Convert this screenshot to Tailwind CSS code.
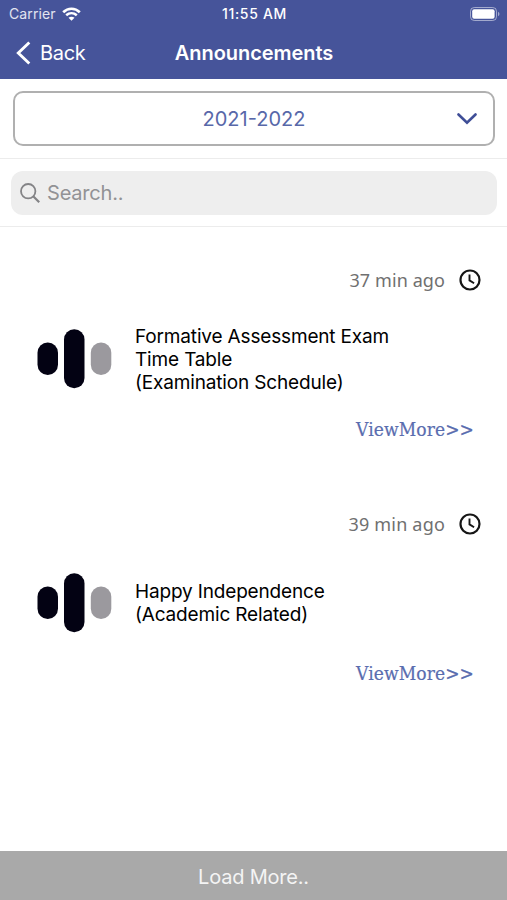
<!DOCTYPE html>
<html lang="en">
<head>
    <meta charset="UTF-8">
    <meta name="viewport" content="width=device-width, initial-scale=1.0">
    <title>Announcements</title>
    <script src="https://cdn.jsdelivr.net/npm/@tailwindcss/browser@4"></script>
</head>
<body class="bg-white font-['Inter',sans-serif]">
    <div class="flex h-[900px] w-[507px] flex-col overflow-hidden">
        <header class="h-[79px] bg-[#46549a] text-white">
            <div class="grid h-[27px] grid-cols-3 items-center pl-[9px] pr-[7px]">
                <div class="flex items-center gap-[6px]">
                    <span class="text-[14px] tracking-[0.1px] text-white/85">Carrier</span>
                    <svg class="h-[14px] w-[19px]" viewBox="0 0 19 14" fill="none" aria-hidden="true">
                        <path d="M1.2 5.2C6 .6 13 .6 17.8 5.2" stroke="currentColor" stroke-width="2.7"/>
                        <path d="M4.2 8.3C7.3 5.5 11.7 5.5 14.8 8.3" stroke="currentColor" stroke-width="2.5"/>
                        <path d="M9.5 13.8 6.5 10.7C8.2 9.3 10.8 9.3 12.5 10.7Z" fill="currentColor"/>
                    </svg>
                </div>
                <span class="text-center text-[14px] font-medium tracking-[0.7px] whitespace-nowrap">11:55 AM</span>
                <svg class="h-[14px] w-[30px] justify-self-end" viewBox="0 0 30 14" fill="none" aria-hidden="true">
                    <rect x=".5" y=".5" width="26" height="13" rx="3.8" stroke="#fff" stroke-opacity=".5"/>
                    <rect x="2.2" y="2.2" width="22.4" height="9.6" rx="2" fill="#fff"/>
                    <path d="M28 4.8c2 .8 2 3.6 0 4.4Z" fill="#fff" fill-opacity=".5"/>
                </svg>
            </div>
            <nav class="grid h-[52px] grid-cols-[1fr_auto_1fr] items-center pl-4 pr-[15px]">
                <a href="#" class="flex items-center gap-[9px]">
                    <svg class="h-6 w-[15px]" viewBox="0 0 15 24" fill="none" aria-hidden="true">
                        <path d="M13.3 1.5 2.3 12l11 10.5" stroke="currentColor" stroke-width="2.9"/>
                    </svg>
                    <span class="text-[20px] tracking-[-0.3px]">Back</span>
                </a>
                <h1 class="text-[20px] font-semibold tracking-[-0.05px]">Announcements</h1>
            </nav>
        </header>

        <div class="h-20 border-b border-[#ececec] pr-3 pl-[13px] pt-3">
            <button type="button" class="flex h-[55px] w-full items-center rounded-[10px] border-2 border-[#b0b0b0] pl-[36px] pr-4 text-[#5868a9]">
                <span class="flex-1 text-center text-[20px]">2021-2022</span>
                <svg class="h-3 w-5" viewBox="0 0 20 12" fill="none" aria-hidden="true">
                    <path d="m1.5 1.5 8.5 8.3 8.5-8.3" stroke="#3f4e97" stroke-width="2.6" stroke-linecap="round"/>
                </svg>
            </button>
        </div>

        <div class="h-[68px] border-b border-[#ececec] pl-[11px] pr-[10px] pt-3">
            <div class="flex h-11 items-center gap-[7px] rounded-[12px] bg-[#eeeeee] px-[9px] text-[#929295]">
                <svg class="h-5 w-5" viewBox="0 0 20 20" fill="none" stroke="#838386" stroke-width="1.8" aria-hidden="true">
                    <circle cx="8.2" cy="8.2" r="7.2"/>
                    <path d="m13.2 13.2 6 6" stroke-width="2.2"/>
                </svg>
                <span class="text-[20px] tracking-[-0.2px]">Search..</span>
            </div>
        </div>

        <main class="flex-1">
            <article class="h-[244px] pt-[38px]">
                <div class="flex h-[30px] items-center justify-end gap-[14px] pr-[26px]">
                    <time class="font-['Noto_Sans',sans-serif] text-[18px] tracking-[0.1px] text-[#707070]">37 min ago</time>
                    <svg class="h-[22px] w-[22px]" viewBox="0 0 22 22" fill="none" stroke="#161616" aria-hidden="true">
                        <circle cx="11" cy="11" r="9.5" stroke-width="2.2"/>
                        <path d="M10.5 5.6v5.8l4.6 2.8" stroke-width="1.9"/>
                    </svg>
                </div>
                <div class="mt-[29px] flex h-[70px] items-center gap-[23px] pl-[37px]">
                    <svg class="h-[60px] w-[75px]" viewBox="0 0 75 60" aria-hidden="true">
                        <rect x=".5" y="13.5" width="20.5" height="32.5" rx="10.2" fill="#030213"/>
                        <rect x="27" y=".3" width="20.5" height="59" rx="10.2" fill="#030213"/>
                        <rect x="53.8" y="13.5" width="20.5" height="32.5" rx="10.2" fill="#9b999e"/>
                    </svg>
                    <p class="text-[19px] leading-[23px] tracking-[-0.16px] text-black">Formative Assessment Exam<br>Time Table<br>(Examination Schedule)</p>
                </div>
                <div class="mt-5 flex h-[30px] items-center justify-end pr-[33px]">
                    <a href="#" class="font-['DejaVu_Serif_Condensed','DejaVu_Serif',serif] text-[19px] tracking-[0.1px] text-[#5a6daf] [-webkit-text-stroke:0.2px_#5a6daf]">ViewMore&gt;&gt;</a>
                </div>
            </article>

            <article class="h-[244px] pt-[38px]">
                <div class="flex h-[30px] items-center justify-end gap-[14px] pr-[26px]">
                    <time class="font-['Noto_Sans',sans-serif] text-[18px] tracking-[0.2px] text-[#707070]">39 min ago</time>
                    <svg class="h-[22px] w-[22px]" viewBox="0 0 22 22" fill="none" stroke="#161616" aria-hidden="true">
                        <circle cx="11" cy="11" r="9.5" stroke-width="2.2"/>
                        <path d="M10.5 5.6v5.8l4.6 2.8" stroke-width="1.9"/>
                    </svg>
                </div>
                <div class="mt-[29px] flex h-[70px] items-center gap-[23px] pl-[37px]">
                    <svg class="h-[60px] w-[75px]" viewBox="0 0 75 60" aria-hidden="true">
                        <rect x=".5" y="13.5" width="20.5" height="32.5" rx="10.2" fill="#030213"/>
                        <rect x="27" y=".3" width="20.5" height="59" rx="10.2" fill="#030213"/>
                        <rect x="53.8" y="13.5" width="20.5" height="32.5" rx="10.2" fill="#9b999e"/>
                    </svg>
                    <p class="text-[19px] leading-[23px] tracking-[-0.16px] text-black">Happy Independence<br>(Academic Related)</p>
                </div>
                <div class="mt-5 flex h-[30px] items-center justify-end pr-[33px]">
                    <a href="#" class="font-['DejaVu_Serif_Condensed','DejaVu_Serif',serif] text-[19px] tracking-[0.1px] text-[#5a6daf] [-webkit-text-stroke:0.2px_#5a6daf]">ViewMore&gt;&gt;</a>
                </div>
            </article>
        </main>

        <button type="button" class="h-[49px] w-full bg-[#a9a9a9] pt-[2px] text-center text-[20px] tracking-[-0.2px] text-[#f4f4f4]">Load More..</button>
    </div>
</body>
</html>
